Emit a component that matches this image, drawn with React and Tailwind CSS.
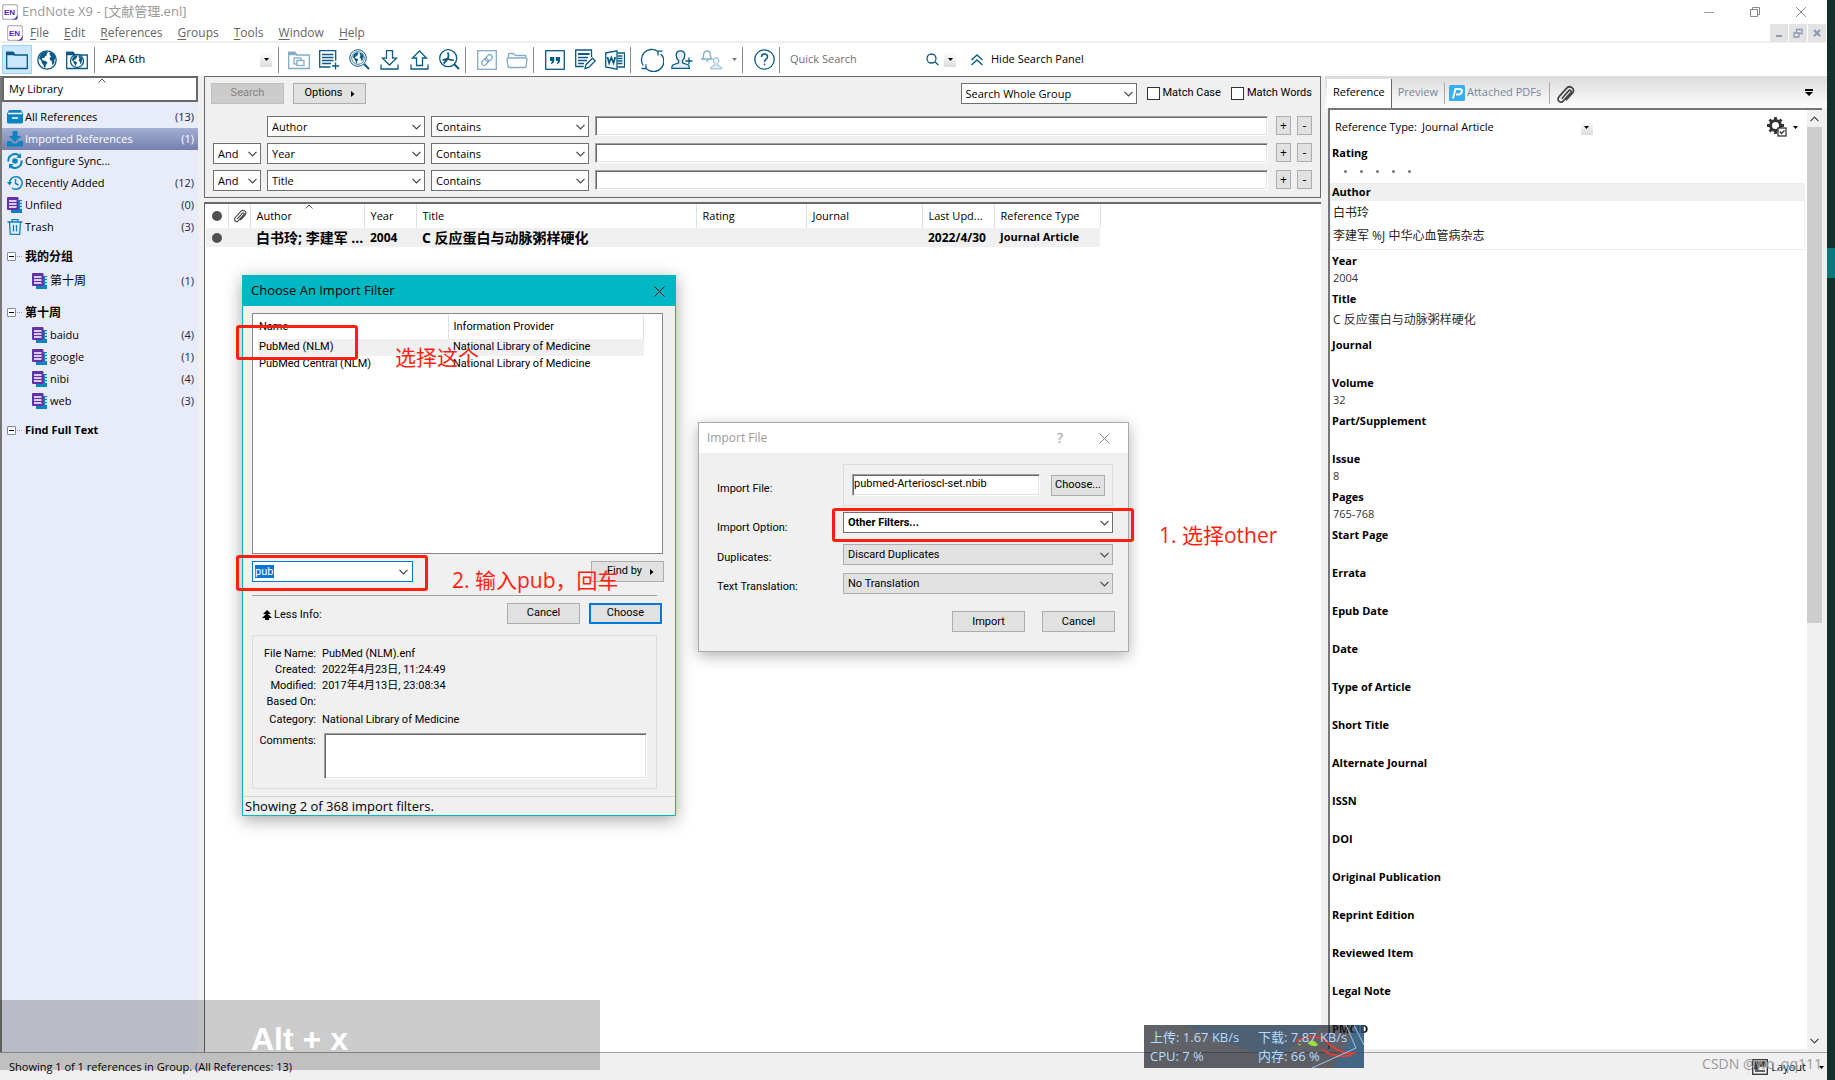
import React, { useState } from 'react';

const UI = "font-['Open_Sans','Noto_Sans_CJK_SC',sans-serif]";
const DIALOG = "font-['Roboto','Noto_Sans_CJK_SC',sans-serif]";

// ============ shared controls ============

const Chevron = ({ className = '' }) => (
    <svg className={className} width="9" height="6" viewBox="0 0 9 6" fill="none" stroke="#444" strokeWidth="1.2">
        <path d="M0.5 0.8 L4.5 4.8 L8.5 0.8" />
    </svg>
);

const Caret = ({ color = '#000' }) => (
    <svg width="5" height="3" viewBox="0 0 5 3" fill={color}>
        <path d="M0 0h5L2.5 3z" />
    </svg>
);

const CaretButton = ({ label }) => (
    <button aria-label={label} className="flex h-[15px] w-3 items-center justify-center bg-linear-to-b from-white to-[#dcdcdc]">
        <Caret />
    </button>
);

const Select = ({ label, options, width, tone = 'border-[#707070] bg-white', bold = false, id }) => (
    <div className={`relative shrink-0 ${width}`}>
        <select
            id={id}
            aria-label={label}
            className={`block h-[21px] w-full appearance-none border pr-4 pl-1 text-[11px] leading-[18px] text-black ${tone} ${bold ? 'font-bold' : ''}`}
        >
            {options.map((o) => <option key={o}>{o}</option>)}
        </select>
        <Chevron className="pointer-events-none absolute top-2 right-1" />
    </div>
);

const Button = ({ children, className = 'w-[73px]', disabled, tone = 'border border-[#adadad] bg-[#e1e1e1] text-black' }) => (
    <button disabled={disabled} className={`flex h-[21px] shrink-0 items-center justify-center gap-2 text-[11px] ${DIALOG} ${tone} ${className}`}>
        {children}
    </button>
);

const sunken = 'border border-t-[#a0a0a0] border-l-[#a0a0a0] border-r-white border-b-white bg-white shadow-[inset_1px_1px_0_#696969,inset_-1px_-1px_0_#e3e3e3] outline-none';

// ============ icons ============

const Svg = ({ children, size = 24, w, className = '', ...rest }) => (
    <svg
        className={`shrink-0 ${className}`}
        width={w || size}
        height={size}
        viewBox={`0 0 ${w || size} ${size}`}
        fill="none"
        stroke="#0a5a85"
        strokeWidth="1.3"
        {...rest}
    >
        {children}
    </svg>
);

const EndNoteLogo = () => (
    <Svg size={16} stroke="none">
        <rect x="0.5" y="0.5" width="15" height="15" rx="2.5" fill="#fff" stroke="#b5b5bd" />
        <path d="M15.5 10v3.5q0 2-2 2h-4q5-.5 6-5.500z" fill="#5b2da8" />
        <text x="7.500" y="10.500" textAnchor="middle" fontSize="8" fontWeight="bold" fill="#5422c0" fontFamily="Liberation Sans">EN</text>
    </Svg>
);

const Continents = () => (
    <g fill="#0a5a85" stroke="none">
        <path d="M3.500 4.500Q6 1.500 9.500 1.200L11 2.500 9.500 4 10 5.200 8.200 6.200 7.200 8 5.500 8 5 9.500 6.500 10.500 9 11.200 10.500 12.800 9 14.800 8.200 17.500 7 18 6.500 15 4.800 13 4.300 10.500 1.800 8.500z" />
        <path d="M12.500 2.200L15 2.500 17.800 5.500 18.500 8.800 17.200 10 17.500 12.500 15.500 15 14.800 13.500 14.800 11 13 10 12.500 8 14.200 6.500 12.800 5z" />
    </g>
);

const Globe = () => (
    <Svg size={20}>
        <circle cx="10" cy="10" r="9.200" />
        <Continents />
    </Svg>
);

const FolderIcon = () => (
    <Svg size={20} w={22}>
        <path d="M.7 18.500V2.500h6.500l1.500 2.500h12.600v13.500z" />
        <path d="M1 2.500h6l1.200 2H1z" fill="#0a5a85" />
    </Svg>
);

const FolderGlobe = () => (
    <Svg size={20} w={22}>
        <path d="M.7 18.500V2.500h6.500l1.500 2.500h12.600v13.500z" />
        <path d="M1 2.500h6l1.200 2H1z" fill="#0a5a85" />
        <circle cx="11" cy="11" r="6.500" fill="#fff" />
        <g transform="translate(4.600 4.600) scale(.64)"><Continents /></g>
    </Svg>
);

const CopyFolder = () => (
    <Svg size={20} w={22} stroke="#82adc4">
        <path d="M.7 18.500V2.500h6.500l1.500 2.500h12.600v13.500z" />
        <path d="M1 2.500h6l1.200 2H1z" fill="#82adc4" />
        <rect x="6" y="8" width="7" height="6" />
        <rect x="9" y="10.500" width="7" height="5" fill="#fff" />
    </Svg>
);

const NewReference = () => (
    <Svg size={20}>
        <path d="M11.500 17H.7V.7h16v10M3 4.500h11.500M3 7.500h11.500M3 10.500h11.500M3 13.500h9M16.500 12.500v7M13 16h7" />
    </Svg>
);

const OnlineSearch = () => (
    <Svg size={21}>
        <circle cx="9" cy="9" r="8.300" strokeWidth="1" />
        <circle cx="9" cy="9" r="6.300" strokeWidth=".8" />
        <g transform="translate(2.500 2.500) scale(.65)"><Continents /></g>
        <path d="M15 15l5 5" strokeWidth="2" />
    </Svg>
);

const ImportIcon = () => (
    <Svg size={20} w={19}>
        <path d="M6.500.7h6v7.500h4L9.500 15 2.500 8.200h4zM1 14.500v4.500h17v-4.500" />
    </Svg>
);

const ExportIcon = () => (
    <Svg size={20} w={19}>
        <path d="M6.500 15.500V8h-4L9.500 1l7 7h-4v7.500zM1 14.500v4.500h17v-4.500" />
    </Svg>
);

const FindFullText = () => (
    <Svg size={21}>
        <circle cx="9.200" cy="9.200" r="8.500" />
        <path d="M15 15l5 5" strokeWidth="2" />
        <path d="M8.500 3.500q1.800 2 .3 6.200Q6.500 13 4.500 14.500M8.800 9.700q4 2 6 1M8.800 9.700q-3 1.300-5.300 1.200" strokeWidth="1.800" />
    </Svg>
);

const LinkIcon = () => (
    <Svg size={20} stroke="#82adc4">
        <rect x=".7" y=".7" width="18.600" height="18.600" />
        <g transform="rotate(45 10 10)">
            <rect x="7.500" y="3.500" width="5" height="7.500" rx="2.500" />
            <rect x="7.500" y="9" width="5" height="7.500" rx="2.500" />
        </g>
    </Svg>
);

const OpenFolder = () => (
    <Svg size={18} w={22} stroke="#82adc4">
        <path d="M2.500 7V3.500q0-1 1-1h4l2 2h9.500q1 0 1 1V7M2.200 7h17.600q1.300 0 1.200 1.200l-1 7.300q-.2 1-1.200 1H3.200q-1 0-1.200-1L1 8.200Q1 7 2.200 7z" />
    </Svg>
);

const QuoteIcon = () => (
    <Svg size={20}>
        <rect x=".7" y=".7" width="18.600" height="18.600" />
        <path d="M5 7h4.300v3.500Q9 13.500 6 14v-1.500q1.300-.4 1.300-1.500H5zM10.800 7h4.300v3.500q-.3 3-3.300 3.500v-1.500q1.300-.4 1.300-1.500h-2.300z" fill="#0a5a85" stroke="none" />
    </Svg>
);

const EditCitation = () => (
    <Svg size={21}>
        <path d="M16.500 8V1H.7v16.500h8" />
        <path d="M3 5h11.500" strokeWidth="2" />
        <path d="M3 8.500h10M3 11.500h9M3 14.500h6" />
        <path d="M10 19.500l1-3.800 6.500-6.500 2.700 2.700-6.500 6.600z" fill="#fff" />
    </Svg>
);

const WordIcon = () => (
    <Svg size={20}>
        <path d="M12.500 3h7v14h-7M12.500 6h5M12.500 8.500h5M12.500 11h5M12.500 13.500h5" />
        <path d="M.7 3L12 .8v18.400L.7 17z" fill="#fff" />
        <path d="M2.500 7l1.600 6L6.300 7.500 8.500 13l1.800-6" strokeWidth="1.700" />
    </Svg>
);

const SyncIcon = () => (
    <Svg size={24}>
        <path d="M3.300 17.500A10.200 10.200 0 0 1 17.500 3.300M20.800 6A10.200 10.200 0 0 1 6.300 20.600M18 7.500V3.200h4.500M1.500 20.500H6v-4.300" />
    </Svg>
);

const UserPath = ({ fill = '#e3eef5' }) => (
    <path d="M9.500.8q4.300 0 4.300 4.500 0 3.500-2.300 5.200v2.300l5.800 2.200q1 .7 1 3.300H.8q0-2.600 1-3.300l5.800-2.200v-2.300Q5.200 8.800 5.200 5.300 5.200.8 9.500.8z" fill={fill} />
);

const AddUser = () => (
    <Svg size={20} w={22}>
        <UserPath />
        <path d="M18 7.500v7M14.500 11h7" />
    </Svg>
);

const BellUser = () => (
    <Svg size={20} w={22} stroke="#82adc4">
        <path d="M1 9q1.700-1 1.700-5 .5-3 3.300-3t3.300 3q0 4 1.700 5zM5 10.800h2.500" />
        <g transform="translate(9 7) scale(.65)"><UserPath /></g>
    </Svg>
);

const HelpIcon = () => (
    <Svg size={21}>
        <circle cx="10.500" cy="10.500" r="9.700" />
        <path d="M7.500 8q0-3 3-3t3 2.800q0 1.700-1.700 2.700-1.300.8-1.300 2.500M10.500 14.500v1.800" strokeWidth="1.500" />
    </Svg>
);

const Clip = ({ size = 14, stroke = 1.6 }) => (
    <svg width={size} height={size} viewBox="0 0 20 20" fill="none" stroke="#444" strokeWidth={stroke}>
        <path d="M6 14.500L13.500 6q1-1 2 0t0 2.200L7.500 17q-2 2-4.200.2T3 12.500L11.500 3Q14 .8 16.800 2.800t1 5.200L10.500 16" />
    </svg>
);

const blue = '#0a84c1';

const ArchiveIcon = () => (
    <Svg size={16} stroke="none">
        <path d="M2 1h12l2 4H0z" fill={blue} />
        <rect y="3.500" width="16" height="11" rx="1.500" fill={blue} />
        <path d="M1 4.500h14M5 9h6" stroke="#fff" strokeWidth="1.500" />
    </Svg>
);

const InboxIcon = () => (
    <Svg size={16} stroke="none">
        <path d="M5.500 0h5v5h4L8 11 1.500 5h4z" fill={blue} />
        <path d="M0 10h4l2 2.500h4L12 10h4v5.500H0z" fill={blue} />
    </Svg>
);

const SyncSmall = () => (
    <Svg size={16} stroke={blue} strokeWidth="2">
        <path d="M1.500 8.500A6.500 6.500 0 0 1 13 3.500M14.500 7.500A6.500 6.500 0 0 1 3 12.500" />
        <path d="M14 0v5H9.500zM2 16v-5h4.500z" fill={blue} stroke="none" />
        <circle cx="8" cy="8" r="2.800" fill={blue} stroke="none" />
    </Svg>
);

const ClockIcon = () => (
    <Svg size={16} stroke={blue} strokeWidth="1.500">
        <path d="M2.500 8A6.300 6.300 0 1 1 5 13M8.500 4v4.500l3 1.500" />
        <path d="M0 7h5L2.500 10.500z" fill={blue} stroke="none" />
    </Svg>
);

const GroupIcon = () => (
    <Svg size={16} stroke="none">
        <path d="M11 3h4v13H4v-3h7z" fill={blue} />
        <path d="M13 5h2M13 8h2M13 11h2" stroke="#fff" />
        <rect width="11.500" height="13" rx="1" fill="#6233a5" />
        <path d="M2 4h7.500M2 7h7.500M2 10h7.500" stroke="#fff" />
    </Svg>
);

const TrashIcon = () => (
    <Svg size={16} stroke={blue}>
        <path d="M.5 3h15M5 3V.7h6V3M2.500 3l.8 12.300h9.400L13.500 3M6.500 6v6.500M9.500 6v6.500" />
    </Svg>
);

// ============ title bar, menu, toolbar ============

const menus = ['File', 'Edit', 'References', 'Groups', 'Tools', 'Window', 'Help'];

const TitleBar = () => (
    <header className="flex h-6 shrink-0 items-center justify-between bg-white pr-5 pl-[2px]">
        <h1 className="flex items-center gap-1 text-[13px] text-[#999]">
            <EndNoteLogo />
            EndNote X9 - [文献管理.enl]
        </h1>
        <div className="flex gap-[34px]">
            <button aria-label="Minimize"><Svg size={12} stroke="#999" strokeWidth="1"><path d="M1 6.500h10" /></Svg></button>
            <button aria-label="Restore"><Svg size={12} stroke="#888" strokeWidth="1"><path d="M1.500 3.500h7v7h-7zM3.500 3.500v-2h7v7h-2" /></Svg></button>
            <button aria-label="Close"><Svg size={12} stroke="#888" strokeWidth="1"><path d="M1 1l10 10M11 1L1 11" /></Svg></button>
        </div>
    </header>
);

const MenuBar = () => (
    <nav className="flex h-[19px] shrink-0 items-center justify-between border-b-2 border-[#f0f0f0] bg-white pr-px pl-[7px]">
        <div className="flex items-center gap-[7px]">
            <EndNoteLogo />
            <div className="flex gap-[15px] text-xs text-[#666]">
                {menus.map((m) => (
                    <button key={m}><span className="underline underline-offset-2">{m[0]}</span>{m.slice(1)}</button>
                ))}
            </div>
        </div>
        <div className="flex gap-px">
            <button aria-label="Minimize document" className="flex h-[18px] w-[18px] items-center justify-center bg-[#e3e3e3]">
                <Svg size={10} stroke="#8a9bb0" strokeWidth="2"><path d="M2 8h6" /></Svg>
            </button>
            <button aria-label="Restore document" className="flex h-[18px] w-[18px] items-center justify-center bg-[#e3e3e3]">
                <Svg size={10} stroke="#8a9bb0"><path d="M1 5h5v4H1zM3.500 5V1.500h5.500v4H6" /></Svg>
            </button>
            <button aria-label="Close document" className="flex h-[18px] w-[18px] items-center justify-center bg-[#e3e3e3]">
                <Svg size={10} stroke="#8a9bb0" strokeWidth="2.200"><path d="M2 2l6 6M8 2L2 8" /></Svg>
            </button>
        </div>
    </nav>
);

const Separator = () => <div className="h-[26px] w-px shrink-0 bg-[#888]" />;

const Tool = ({ label, children, active }) => (
    <button
        aria-label={label}
        className={`flex h-[29px] w-[30px] shrink-0 items-center justify-center ${active ? 'border border-[#99d1ff] bg-[#cce8ff]' : ''}`}
    >
        {children}
    </button>
);

const Toolbar = () => (
    <div className="flex h-[33px] shrink-0 items-center bg-white pl-[2px]">
        <Tool label="Local library" active><FolderIcon /></Tool>
        <Tool label="Online search"><Globe /></Tool>
        <Tool label="Integrated library"><FolderGlobe /></Tool>
        <div className="w-[2px]" />
        <Separator />
        <div className="flex w-[183px] items-center justify-between pr-[6px] pl-[10px] text-[11px]">
            <span>APA 6th</span>
            <CaretButton label="Output style" />
        </div>
        <Separator />
        <div className="flex pl-[5px]">
            <Tool label="Copy to local library"><CopyFolder /></Tool>
            <Tool label="New reference"><NewReference /></Tool>
            <Tool label="Online mode"><OnlineSearch /></Tool>
            <Tool label="Import"><ImportIcon /></Tool>
            <Tool label="Export"><ExportIcon /></Tool>
            <Tool label="Find full text"><FindFullText /></Tool>
        </div>
        <div className="w-px" />
        <Separator />
        <div className="flex pr-px pl-[6px]">
            <Tool label="Open link"><LinkIcon /></Tool>
            <Tool label="Open file"><OpenFolder /></Tool>
        </div>
        <Separator />
        <div className="flex pl-[6px]">
            <Tool label="Insert citation"><QuoteIcon /></Tool>
            <Tool label="Format bibliography"><EditCitation /></Tool>
            <Tool label="Go to word processor"><WordIcon /></Tool>
        </div>
        <Separator />
        <div className="flex items-center pl-[6px]">
            <Tool label="Sync library"><SyncIcon /></Tool>
            <Tool label="Share library"><AddUser /></Tool>
            <Tool label="Activity feed"><BellUser /></Tool>
        </div>
        <button aria-label="Activity options" className="flex w-[15px] justify-center"><Caret color="#777" /></button>
        <Separator />
        <div className="flex pl-[6px]"><Tool label="Help"><HelpIcon /></Tool></div>
        <Separator />
        <input aria-label="Quick Search" placeholder="Quick Search" className="w-[146px] bg-transparent pl-[10px] text-[11px] outline-none placeholder:text-[#707070]" />
        <button aria-label="Run search" className="mr-[5px]">
            <Svg size={13}><circle cx="5.500" cy="5.500" r="4.500" /><path d="M9 9l3.500 3" /></Svg>
        </button>
        <CaretButton label="Search history" />
        <button className="ml-[15px] flex items-center gap-[8px] text-[11px]">
            <Svg size={12}><path d="M.5 6L6 1l5.500 5M.5 11L6 6l5.500 5" /></Svg>
            Hide Search Panel
        </button>
    </div>
);

// ============ group sidebar ============

const topGroups = [
    { name: 'All References', count: 13, icon: <ArchiveIcon /> },
    { name: 'Imported References', count: 1, icon: <InboxIcon />, selected: true },
    { name: 'Configure Sync...', icon: <SyncSmall /> },
    { name: 'Recently Added', count: 12, icon: <ClockIcon /> },
    { name: 'Unfiled', count: 0, icon: <GroupIcon /> },
    { name: 'Trash', count: 3, icon: <TrashIcon /> },
];

const groupSets = [
    { name: '我的分组', size: 'text-xs', row: 'h-[26px] text-xs', items: [['第十周', 1]] },
    { name: '第十周', size: 'text-xs', row: 'h-[22px]', items: [['baidu', 4], ['google', 1], ['nibi', 4], ['web', 3]] },
    { name: 'Find Full Text', size: 'text-[11px]', items: [] },
];

const Sidebar = () => (
    <aside className="flex w-[198px] shrink-0 flex-col border-l-2 border-[#777] bg-[#e8ecf9] text-[11px]">
        <button className="relative flex h-[26px] shrink-0 items-center border-2 border-[#696969] bg-white pl-[5px]">
            My Library
            <svg className="absolute top-0 left-[94px]" width="8" height="5" viewBox="0 0 8 5" fill="none" stroke="#555"><path d="M.5 4.500L4 1l3.500 3.500" /></svg>
        </button>
        <ul className="pt-1">
            {topGroups.map((g) => (
                <li key={g.name}>
                    <button className={`flex h-[22px] w-full items-center gap-[2px] pr-1 pl-[5px] ${g.selected ? 'bg-linear-to-b from-[#a3aed2] to-[#7580b0] text-white' : ''}`}>
                        {g.icon}
                        <span>{g.name}</span>
                        {g.count !== undefined && <span className={`ml-auto ${g.selected ? '' : 'text-[#222240]'}`}>({g.count})</span>}
                    </button>
                </li>
            ))}
        </ul>
        {groupSets.map((set) => (
            <section key={set.name} className="pt-[7px]">
                <h2 className={`flex h-[23px] items-center pl-[5px] font-bold ${set.size}`}>
                    <button aria-label={`Collapse ${set.name}`} className="flex h-[9px] w-[9px] items-center justify-center rounded-[1px] border border-[#7b8ba5] bg-white">
                        <span className="h-px w-[5px] bg-black" />
                    </button>
                    <span className="mr-[3px] ml-px w-[5px] border-t border-dotted border-[#999]" />
                    {set.name}
                </h2>
                <ul>
                    {set.items.map(([name, count]) => (
                        <li key={name}>
                            <button className={`flex w-full items-center gap-[2px] pr-1 pl-[30px] ${set.row}`}>
                                <GroupIcon />
                                <span>{name}</span>
                                <span className="ml-auto text-[11px] text-[#222240]">({count})</span>
                            </button>
                        </li>
                    ))}
                </ul>
            </section>
        ))}
    </aside>
);

// ============ search panel ============

const fields = ['Author', 'Year', 'Title'];

const SearchPanel = () => (
    <section className="shrink-0 border border-[#696969] bg-[#f0f0f0] pt-[6px] pr-2 pb-[6px] pl-[6px]">
        <div className="flex items-center gap-[9px] pb-3">
            <Button disabled tone="border border-[#bfbfbf] bg-[#cccccc] text-[#838383]">Search</Button>
            <Button>Options <svg width="4" height="6" viewBox="0 0 4 6"><path d="M0 0l3.500 3L0 6z" /></svg></Button>
            <div className="ml-auto flex items-center">
                <Select label="Search scope" width="w-44" options={['Search Whole Group', 'Search Whole Library']} />
                {['Match Case', 'Match Words'].map((t) => (
                    <label key={t} className={`ml-[10px] flex items-center gap-[3px] text-[11px] ${DIALOG}`}>
                        <input type="checkbox" className="h-[13px] w-[13px] appearance-none border border-[#333] bg-white checked:bg-[#333]" />
                        {t}
                    </label>
                ))}
            </div>
        </div>
        <div className="flex flex-col gap-[6px] pl-[2px]">
            {fields.map((f, i) => (
                <div key={f} className="flex items-start gap-[6px]">
                    {i === 0
                        ? <div className="w-12 shrink-0" />
                        : <Select label="Operator" width="w-12" options={['And', 'Or', 'Not']} />}
                    <Select label="Field" width="w-[158px]" options={[f]} />
                    <Select label="Comparison" width="w-[158px]" options={['Contains', 'Is', 'Begins with']} />
                    <input aria-label={`${f} search text`} className={`mr-[2px] h-5 min-w-0 flex-1 px-1 text-[11px] ${sunken}`} />
                    <button aria-label="Add row" className="h-[19px] w-[15px] border border-[#adadad] bg-[#e1e1e1] text-xs leading-[15px]">+</button>
                    <button aria-label="Remove row" className="h-[19px] w-[15px] border border-[#adadad] bg-[#e1e1e1] text-xs leading-[15px]">-</button>
                </div>
            ))}
        </div>
    </section>
);

// ============ reference list ============

const Dot = () => <span className="block h-[10px] w-[10px] rounded-full bg-[#505050]" />;

const ReferenceList = () => (
    <section className="mt-1 min-h-0 flex-1 border-t-2 border-l border-[#696969] bg-white pl-px">
        <table className="w-[894px] table-fixed border-collapse text-left text-[11px]">
            <colgroup>
                <col className="w-[22px]" /><col className="w-[22px]" /><col className="w-[114px]" />
                <col className="w-[52px]" /><col className="w-[280px]" /><col className="w-[110px]" />
                <col className="w-[116px]" /><col className="w-[72px]" /><col className="w-[106px]" />
            </colgroup>
            <thead>
                <tr className="h-6">
                    <th className="border-r border-[#e0e0e0] pl-[6px]"><Dot /></th>
                    <th className="border-r border-[#e0e0e0] pl-1"><Clip /></th>
                    <th className="relative border-r border-[#e0e0e0] pl-[6px] font-normal">
                        Author
                        <svg className="absolute top-0 left-[54px]" width="8" height="5" viewBox="0 0 8 5" fill="none" stroke="#555"><path d="M.5 4.500L4 1l3.500 3.500" /></svg>
                    </th>
                    {['Year', 'Title', 'Rating', 'Journal', 'Last Upd...', 'Reference Type'].map((h) => (
                        <th key={h} className="truncate border-r border-[#e0e0e0] pl-[6px] font-normal">{h}</th>
                    ))}
                </tr>
            </thead>
            <tbody>
                <tr className="h-[19px] bg-[#f0f0f0] font-bold whitespace-nowrap">
                    <td className="pl-[6px]"><Dot /></td>
                    <td />
                    <td className="pl-[6px] text-sm leading-[19px]">白书玲; 李建军 ...</td>
                    <td className="pl-[6px] text-xs">2004</td>
                    <td className="pl-[6px] text-sm leading-[19px]">C 反应蛋白与动脉粥样硬化</td>
                    <td />
                    <td />
                    <td className="pl-[6px] text-xs">2022/4/30</td>
                    <td className="pl-[6px]">Journal Article</td>
                </tr>
            </tbody>
        </table>
    </section>
);

// ============ reference details ============

const details = [
    ['Journal', ''], ['Volume', '32'], ['Part/Supplement', ''], ['Issue', '8'], ['Pages', '765-768'],
    ['Start Page', ''], ['Errata', ''], ['Epub Date', ''], ['Date', ''], ['Type of Article', ''],
    ['Short Title', ''], ['Alternate Journal', ''], ['ISSN', ''], ['DOI', ''], ['Original Publication', ''],
    ['Reprint Edition', ''], ['Reviewed Item', ''], ['Legal Note', ''], ['PMCID', ''],
];

const Field = ({ label, value, height = 'h-[38px]', valueStyle = 'h-4' }) => (
    <div className={`shrink-0 pl-[2px] ${height}`}>
        <dt className="flex h-[18px] items-center font-bold">{label}</dt>
        <dd className={`flex items-center pl-px text-[#333] ${valueStyle}`}>{value}</dd>
    </div>
);

const DetailPanel = () => (
    <aside className="flex w-[502px] shrink-0 flex-col bg-[#f0f0f0] text-[11px]">
        <div className="flex h-8 shrink-0 items-end bg-linear-to-b from-[#dcdcdc] to-[#fdfdfd] pl-[2px]">
            <button className="h-[29px] border-r border-[#696969] bg-white px-[6px] pb-[2px]">Reference</button>
            <button className="h-[29px] px-[6px] pb-[2px] text-[#74869a]">Preview</button>
            <button className="mb-1 flex h-[22px] items-center gap-[2px] border-x border-[#aaa] pr-2 pb-px pl-1 text-[#74869a]">
                <Svg size={16} stroke="none">
                    <rect width="16" height="16" rx="1.500" fill="#35b1f3" />
                    <path d="M4 13.500L6.500 4h4q3 0 2.300 2.700T9.500 9.500H7" fill="none" stroke="#fff" strokeWidth="2" />
                </Svg>
                Attached PDFs
            </button>
            <button aria-label="Attach file" className="mb-1 pl-[6px]"><Clip size={19} stroke={1.8} /></button>
            <button aria-label="Panel options" className="mb-3 ml-auto mr-[14px]">
                <svg width="8" height="7" viewBox="0 0 8 7"><path d="M0 0h8v2H0zM0 3h8L4 7z" /></svg>
            </button>
        </div>
        <div className="mr-[5px] mb-[3px] ml-[3px] flex min-h-0 flex-1 border-t-2 border-l-2 border-[#777] bg-white">
            <div className="flex min-w-0 flex-1 flex-col overflow-hidden">
                <div className="flex h-[34px] shrink-0 items-center pl-[5px]">
                    <span>Reference Type:</span>
                    <span className="w-[164px] pl-[5px]">Journal Article</span>
                    <CaretButton label="Reference type" />
                    <button aria-label="Field settings" className="mr-[9px] ml-auto flex items-center gap-[6px]">
                        <Svg size={20} stroke="#333">
                            <circle cx="8.500" cy="8.500" r="5" strokeWidth="3" />
                            <path d="M8.500 0v3M8.500 14v3M0 8.500h3M14 8.500h3M2.500 2.500l2 2M12.500 12.500l2 2M14.500 2.500l-2 2M2.500 14.500l2-2" strokeWidth="2.800" />
                            <rect x="11" y="11" width="8" height="8" fill="#fff" />
                            <path d="M13 14.500l1.500 2 3-3" />
                        </Svg>
                        <Caret />
                    </button>
                </div>
                <dl className="flex flex-col">
                    <div className="h-[39px] pl-[2px]">
                        <dt className="flex h-[18px] items-center font-bold">Rating</dt>
                        <dd className="flex gap-[13px] pt-2 pl-3" aria-label="Unrated">
                            {[1, 2, 3, 4, 5].map((n) => <span key={n} className="h-[3px] w-[3px] rounded-full bg-[#777]" />)}
                        </dd>
                    </div>
                    <div className="mr-[2px] mb-[2px] border border-[#eee]">
                        <dt className="flex h-[17px] items-center bg-[#f0f0f0] pl-px font-bold">Author</dt>
                        <dd className="flex h-12 flex-col pl-[2px] text-xs leading-[23px] text-[#222]">
                            <span>白书玲</span>
                            <span>李建军 %J 中华心血管病杂志</span>
                        </dd>
                    </div>
                    <Field label="Year" value="2004" />
                    <Field label="Title" value="C 反应蛋白与动脉粥样硬化" height="h-[46px]" valueStyle="h-6 text-xs" />
                    {details.map(([label, value]) => <Field key={label} label={label} value={value} />)}
                </dl>
            </div>
            <div className="flex w-[15px] shrink-0 flex-col items-center bg-[#f0f0f0]">
                <button aria-label="Scroll up" className="flex h-[17px] items-center"><Chevron className="rotate-180" /></button>
                <div className="h-[496px] w-full bg-[#cdcdcd]" />
                <button aria-label="Scroll down" className="mt-auto flex h-[17px] items-center"><Chevron /></button>
            </div>
        </div>
    </aside>
);

// ============ dialogs ============

const filters = [
    ['PubMed (NLM)', 'National Library of Medicine'],
    ['PubMed Central (NLM)', 'National Library of Medicine'],
];

const info = [
    ['File Name:', 'PubMed (NLM).enf', 'h-4'],
    ['Created:', '2022年4月23日, 11:24:49', 'h-4'],
    ['Modified:', '2017年4月13日, 23:08:34', 'h-4'],
    ['Based On:', '', 'h-4'],
    ['Category:', 'National Library of Medicine', 'h-5'],
];

const FilterDialog = () => {
    const [query, setQuery] = useState('pub');
    return (
        <div role="dialog" aria-label="Choose An Import Filter" className={`absolute top-[275px] left-[242px] flex w-[434px] flex-col border border-[#00b7c3] bg-[#f0f0f0] text-[11px] shadow-[0_4px_16px_rgba(0,0,0,0.35)] ${DIALOG}`}>
            <div className={`flex h-[30px] items-center justify-between bg-[#00b7c3] pr-[10px] pl-2 text-[13px] ${UI}`}>
                <h2>Choose An Import Filter</h2>
                <button aria-label="Close"><Svg size={11} stroke="#000" strokeWidth="1"><path d="M.5.5l10 10M10.500.5l-10 10" /></Svg></button>
            </div>
            <div className="mt-[7px] mr-3 ml-[9px] h-[241px] border border-[#828790] bg-white pt-px pr-[18px] pl-[5px]">
                <table className="w-full table-fixed text-left">
                    <thead>
                        <tr className="h-6">
                            <th className="w-[190px] border-r border-[#e0e0e0] pl-px font-normal">Name</th>
                            <th className="border-r border-[#e0e0e0] pl-[5px] font-normal">Information Provider</th>
                        </tr>
                    </thead>
                    <tbody>
                        {filters.map(([name, provider], i) => (
                            <tr key={name} className={`h-[17px] ${i === 0 ? 'bg-[#f0f0f0]' : ''}`}>
                                <td className="pl-px">{name}</td>
                                <td className="pl-[5px]">{provider}</td>
                            </tr>
                        ))}
                    </tbody>
                </table>
            </div>
            <div className="mt-[7px] mr-[11px] ml-[9px] flex justify-between">
                <div className="flex h-[21px] w-[161px] items-center justify-between border border-[#0078d7] bg-white pr-1 pl-[2px]">
                    <span className="w-[19px] overflow-hidden bg-[#0078d7]">
                        <input aria-label="Filter name" value={query} onChange={(e) => setQuery(e.target.value)} className="block h-[13px] w-full bg-transparent leading-[13px] text-white outline-none" />
                    </span>
                    <Chevron />
                </div>
                <Button className="w-[73px] pl-[6px]">Find by <svg width="4" height="6" viewBox="0 0 4 6"><path d="M0 0l3.500 3L0 6z" /></svg></Button>
            </div>
            <hr className="mt-[13px] mr-[18px] ml-[9px] border-[#a0a0a0]" />
            <div className="mt-[7px] mr-[13px] ml-[19px] flex h-[21px] items-start gap-[9px]">
                <button className="mr-auto flex items-center gap-[2px] pt-1">
                    <svg width="10" height="10" viewBox="0 0 10 10"><path d="M5 0l4 4H1zM5 3l5 5H7v2H3V8H0z" /></svg>
                    Less Info:
                </button>
                <Button>Cancel</Button>
                <Button tone="border-2 border-[#0078d7] bg-[#e1e1e1] text-black">Choose</Button>
            </div>
            <dl className="mt-[11px] mr-[18px] ml-[9px] border border-[#dcdcdc] pt-[10px] pr-[9px] pb-[9px]">
                {info.map(([k, v, h]) => (
                    <div key={k} className={`flex items-center gap-[6px] ${h}`}>
                        <dt className="w-[63px] shrink-0 text-right">{k}</dt>
                        <dd>{v}</dd>
                    </div>
                ))}
                <div className="flex gap-2 pt-[3px]">
                    <dt className="w-[63px] shrink-0 text-right"><label htmlFor="comments">Comments:</label></dt>
                    <dd className="flex-1"><textarea id="comments" className={`block h-[46px] w-full resize-none ${sunken}`} /></dd>
                </div>
            </dl>
            <p className={`mt-[7px] h-[19px] border-t border-[#d7d7d7] pl-[2px] text-[13px] leading-[18px] ${UI}`}>Showing 2 of 368 import filters.</p>
        </div>
    );
};

const ImportDialog = () => (
    <div role="dialog" aria-label="Import File" className={`absolute top-[422px] left-[698px] w-[431px] border border-[#aaa] bg-[#f0f0f0] text-[11px] leading-4 shadow-[0_4px_14px_rgba(0,0,0,0.3)] ${DIALOG}`}>
        <div className={`flex h-[30px] items-center bg-white pr-[18px] pl-2 text-xs text-[#999] ${UI}`}>
            <h2 className="mr-auto">Import File</h2>
            <button className="mr-9 text-sm">?</button>
            <button aria-label="Close"><Svg size={11} stroke="#888" strokeWidth="1"><path d="M.5.5l10 10M10.500.5l-10 10" /></Svg></button>
        </div>
        <div className="flex pt-[11px] pl-[18px]">
            <div className="flex w-[126px] shrink-0 flex-col pt-[17px]">
                <label htmlFor="import-file">Import File:</label>
                <label htmlFor="import-option" className="pt-[23px]">Import Option:</label>
                <label htmlFor="duplicates" className="pt-[14px]">Duplicates:</label>
                <label htmlFor="translation" className="pt-[13px]">Text Translation:</label>
            </div>
            <div className="flex w-[270px] flex-col">
                <div className="mb-[6px] flex h-[42px] items-center gap-[11px] border border-[#dcdcdc] pl-2">
                    <input id="import-file" defaultValue="pubmed-Arterioscl-set.nbib" className={`h-[22px] w-[188px] pb-1 pl-px ${sunken}`} />
                    <Button className="w-[54px]">Choose...</Button>
                </div>
                <Select id="import-option" label="Import Option" bold width="w-full" options={['Other Filters...']} />
                <div className="pt-[11px] pb-2">
                    <Select id="duplicates" label="Duplicates" width="w-full" tone="border-[#adadad] bg-[#e1e1e1]" options={['Discard Duplicates', 'Import All']} />
                </div>
                <Select id="translation" label="Text Translation" width="w-full" tone="border-[#adadad] bg-[#e1e1e1]" options={['No Translation']} />
            </div>
        </div>
        <div className="flex justify-end gap-[17px] pt-4 pr-[13px] pb-[19px]">
            <Button>Import</Button>
            <Button>Cancel</Button>
        </div>
    </div>
);

// ============ overlays ============

const Annotations = () => (
    <div className="pointer-events-none text-[21px] leading-7 whitespace-nowrap text-[#ff1f10]">
        <div className="absolute top-[325px] left-[236px] h-[35px] w-[122px] rounded-[3px] border-3 border-[#ff1f10]" />
        <div className="absolute top-[555px] left-[236px] h-9 w-48 rounded-[3px] border-3 border-[#ff1f10]" />
        <div className="absolute top-[508px] left-[832px] h-[34px] w-[302px] rounded-[3px] border-3 border-[#ff1f10]" />
        <p className="absolute top-[343px] left-[395px]">选择这个</p>
        <p className="absolute top-[566px] left-[452px]">2. 输入pub，回车</p>
        <p className="absolute top-[521px] left-[1159px]">1. 选择other</p>
    </div>
);

const NetMonitor = () => (
    <div className="absolute bottom-3 left-[1144px] grid h-[43px] w-[220px] grid-cols-[108px_1fr] content-center overflow-hidden bg-[#1c2026]/70 pl-[6px] text-[13px] leading-[19px] whitespace-nowrap text-[#b5dcff]">
        <svg className="absolute top-0 right-0" width="180" height="43" viewBox="0 0 180 43" fill="none">
            <path d="M0 0l90 36 20-16 30-20z" fill="#2b5f8c" opacity=".35" />
            <path d="M150 43l22-43h8v43z" fill="#2b6ea8" opacity=".5" />
            <path d="M112 16q20-10 32 2t28 10M138 24q12 10 30 6" stroke="#d8403a" strokeWidth="2" />
            <path d="M128 43l44-20-10-23M170 0l10 20" stroke="#9cc8ea" />
            <path d="M124 18q4-4 8 0t-5 2zM114 19l3 1" stroke="#9be03a" fill="#9be03a" />
        </svg>
        <span className="relative">上传: 1.67 KB/s</span>
        <span className="relative">下载: 7.87 KB/s</span>
        <span className="relative">CPU: 7 %</span>
        <span className="relative">内存: 66 %</span>
    </div>
);

const KeyOverlay = () => (
    <div className="pointer-events-none absolute bottom-[10px] left-0 h-[70px] w-[600px] bg-black/20 pt-[21px] pl-[251px] font-['Liberation_Sans',sans-serif] text-[32px] leading-9 font-bold text-white">
        Alt + x
    </div>
);

const StatusBar = () => (
    <footer className="flex h-7 shrink-0 items-center justify-between border-t border-[#a0a0a0] bg-[#f0f0f0] pt-px pr-[3px] pl-[9px] text-[11px]">
        <span className="relative z-10">Showing 1 of 1 references in Group. (All References: 13)</span>
        <button className="flex items-center gap-[3px] border-l border-[#ddd] pl-[3px]">
            <Svg size={16} stroke="#333">
                <rect x=".7" y=".7" width="14.600" height="14.600" />
                <path d="M3 3h3v7H3zM8 3h5v4H8zM3 12h10" fill="#333" />
            </Svg>
            <span className="pr-[10px]">Layout</span>
            <Caret />
        </button>
    </footer>
);

export default function App() {
    return (
        <div className={`relative flex h-screen overflow-hidden bg-[#14302c] text-black ${UI}`}>
            <div className="flex min-w-0 flex-1 flex-col bg-[#f0f0f0]">
                <TitleBar />
                <MenuBar />
                <Toolbar />
                <div className="flex min-h-0 flex-1">
                    <Sidebar />
                    <main className="mr-1 ml-[6px] flex min-w-0 flex-1 flex-col">
                        <SearchPanel />
                        <ReferenceList />
                    </main>
                    <DetailPanel />
                </div>
                <StatusBar />
            </div>
            <div className="w-2 shrink-0 pt-[248px]"><div className="h-[30px] bg-[#087a7c]" /></div>

            <FilterDialog />
            <ImportDialog />
            <Annotations />
            <KeyOverlay />
            <NetMonitor />
            <p className="pointer-events-none absolute right-[13px] bottom-[6px] text-sm text-[#999]">CSDN @wo_qq111</p>
        </div>
    );
}
